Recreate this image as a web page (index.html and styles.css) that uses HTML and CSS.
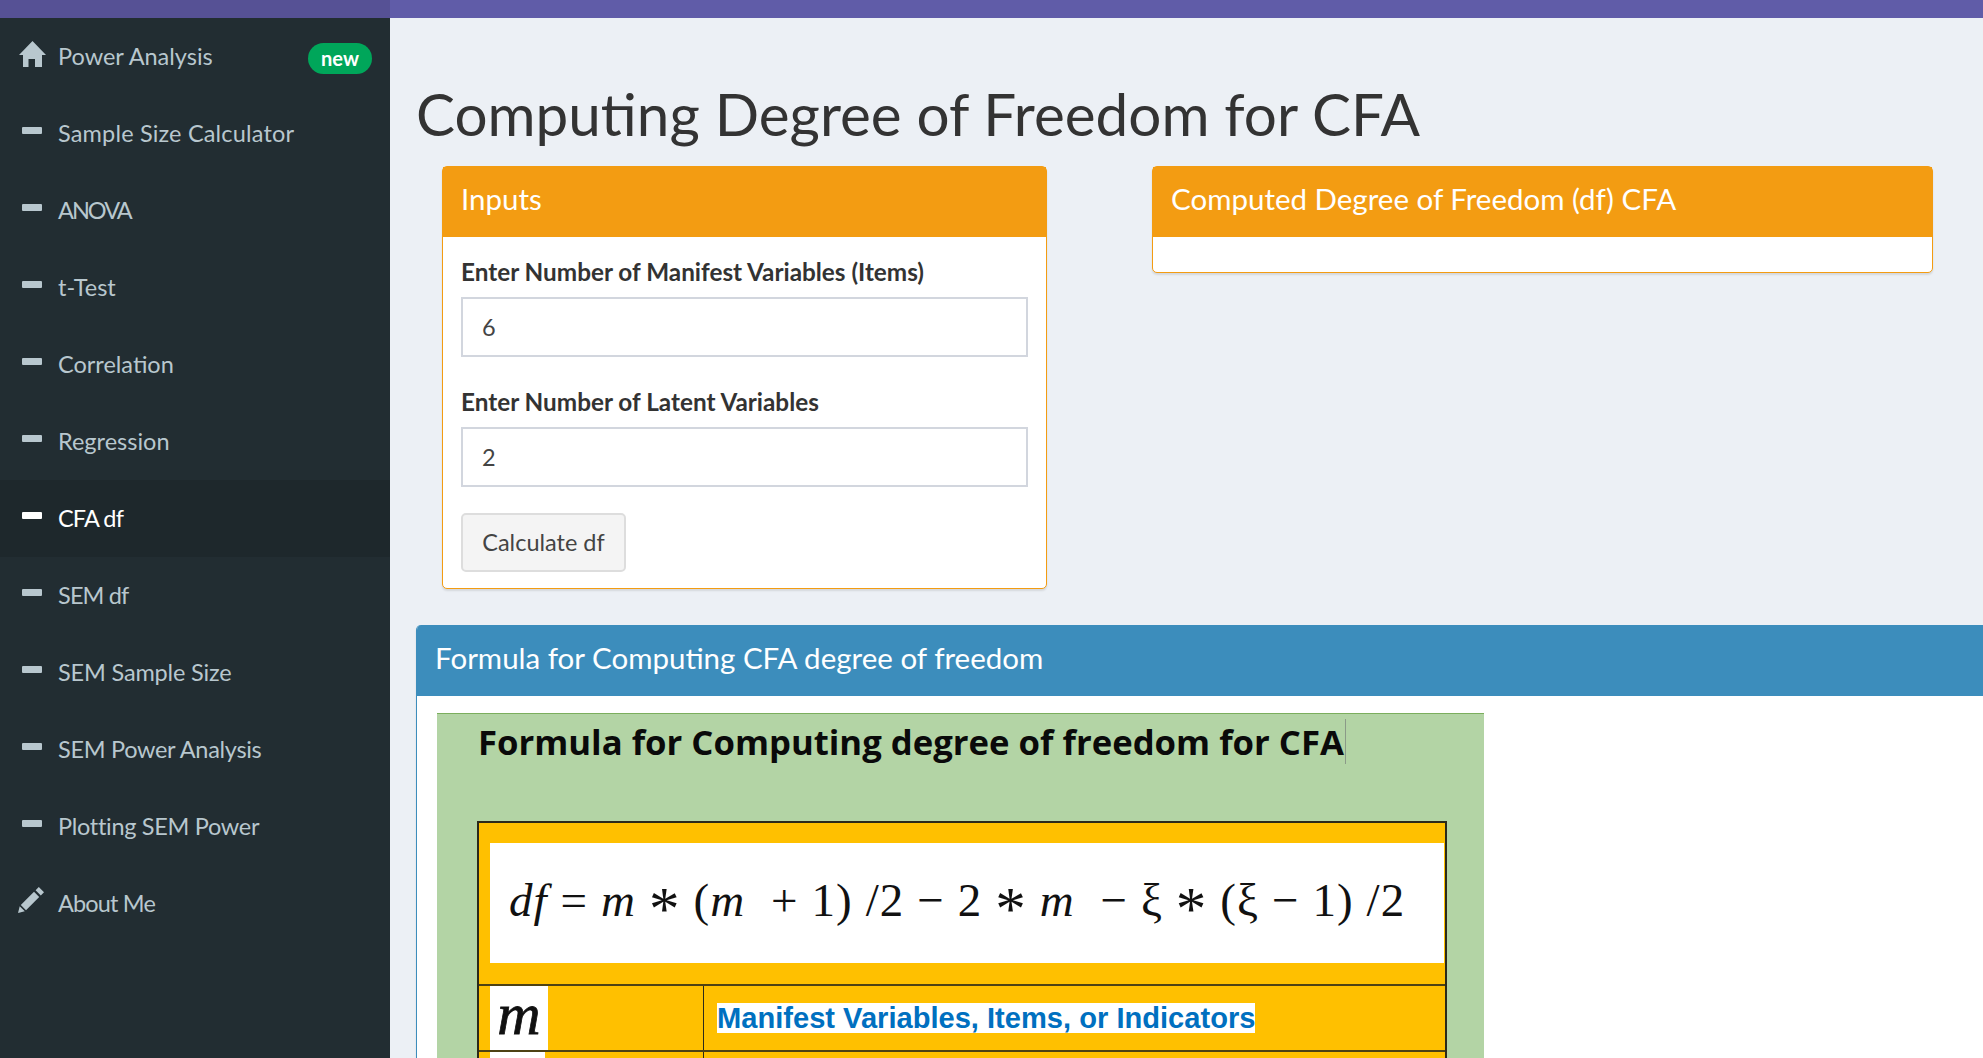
FILE: index.html
```html
<!DOCTYPE html>
<html lang="en">
<head>
<meta charset="utf-8">
<title>Computing Degree of Freedom for CFA</title>
<link rel="stylesheet" href="styles.css">
</head>
<body>
<header class="topbar"><div class="topbar-logo"></div><div class="topbar-nav"></div></header>
<div class="shell">
  <aside class="sidebar">
    <a class="item"><span class="ico"><svg class="home" viewBox="0 0 27 26"><path d="M13.500 0L27 14h-4v12h-7V18H9.500v8H4V14H0z"/></svg></span><span class="label">Power Analysis</span><span class="badge">new</span></a>
    <a class="item"><span class="ico"><i class="dash"></i></span><span class="label ls-p">Sample Size Calculator</span></a>
    <a class="item"><span class="ico"><i class="dash"></i></span><span class="label ls-l">ANOVA</span></a>
    <a class="item"><span class="ico"><i class="dash"></i></span><span class="label">t-Test</span></a>
    <a class="item"><span class="ico"><i class="dash"></i></span><span class="label">Correlation</span></a>
    <a class="item"><span class="ico"><i class="dash"></i></span><span class="label">Regression</span></a>
    <a class="item active"><span class="ico"><i class="dash"></i></span><span class="label ls-m">CFA df</span></a>
    <a class="item"><span class="ico"><i class="dash"></i></span><span class="label ls-m">SEM df</span></a>
    <a class="item"><span class="ico"><i class="dash"></i></span><span class="label ls-xs">SEM Sample Size</span></a>
    <a class="item"><span class="ico"><i class="dash"></i></span><span class="label ls-s">SEM Power Analysis</span></a>
    <a class="item"><span class="ico"><i class="dash"></i></span><span class="label ls-s">Plotting SEM Power</span></a>
    <a class="item"><span class="ico"><svg class="pencil" viewBox="0 0 26 26"><path d="M0 26l1.700-6.800 5.100 5.100zM2.800 18L16 4.800 21.200 10 8 23.200zM17.600 3.200L20.800 0 26 5.200l-3.200 3.200z"/></svg></span><span class="label ls-m">About Me</span></a>
  </aside>
  <main class="content">
    <h1 class="title">Computing Degree of Freedom for CFA</h1>
    <div class="top-row">
      <section class="box box-orange box-inputs">
        <h3 class="box-head">Inputs</h3>
        <div class="box-body">
          <label class="field-label">Enter Number of Manifest Variables (Items)</label>
          <div class="input">6</div>
          <label class="field-label second">Enter Number of Latent Variables</label>
          <div class="input">2</div>
          <button class="btn">Calculate df</button>
        </div>
      </section>
      <section class="box box-orange box-output">
        <h3 class="box-head">Computed Degree of Freedom (df) CFA</h3>
        <div class="output-body"></div>
      </section>
    </div>
    <section class="box box-blue">
      <h3 class="box-head">Formula for Computing CFA degree of freedom</h3>
      <div class="formula-body">
        <div class="picture">
          <div class="pic-title"><span class="pic-title-text">Formula for Computing degree of freedom for CFA</span></div>
          <div class="pic-table">
            <div class="pic-formula-row">
              <div class="pic-formula"><span class="math"><i>df</i> = <i>m</i> <span class="ast">*</span> (<i>m</i>&nbsp; + 1) /2 − 2 <span class="ast">*</span> <i>m</i>&nbsp; − ξ <span class="ast">*</span> (ξ − 1) /2</span></div>
            </div>
            <div class="pic-row">
              <div class="pic-sym"><span class="sym-white">m</span></div>
              <div class="pic-desc"><span class="desc-text">Manifest Variables, Items, or Indicators</span></div>
            </div>
            <div class="pic-row">
              <div class="pic-sym"><span class="sym-white narrow"></span></div>
              <div class="pic-desc"></div>
            </div>
          </div>
        </div>
      </div>
    </section>
  </main>
</div>
</body>
</html>
```
FILE: styles.css
```css
* { box-sizing: border-box; }
html, body { margin: 0; height: 1058px; overflow: hidden; }
body { background: #ecf0f5; font-family: "Lato", "Noto Sans", sans-serif; color: #333; width: 1983px; }

.topbar { display: flex; height: 18px; }
.topbar-logo { width: 390px; background: #565195; }
.topbar-nav { flex: 1; background: #605ca8; }

.shell { display: flex; height: 1040px; overflow: hidden; }
.sidebar { width: 390px; flex: none; background: #222d32; }
.item { display: flex; align-items: center; height: 77px; padding: 0 18px 2px; color: #b8c7ce; font-size: 23.500px; }
.item.active { background: #1e282c; color: #fff; }
.ico { width: 40px; flex: none; display: flex; align-items: center; }
.home { width: 27px; height: 26px; margin: -4px 0 0 1px; fill: #b8c7ce; }
.pencil { width: 26px; height: 26px; margin-top: -6px; fill: #b8c7ce; }
.dash { display: block; width: 20px; height: 7px; margin: -4px 0 0 4px; background: #b8c7ce; border-radius: 1px; }
.active .dash { background: #fff; }
.label { flex: 1; }
.ls-p { letter-spacing: .17px; }
.ls-xs { letter-spacing: -.17px; }
.ls-s { letter-spacing: -.3px; }
.ls-m { letter-spacing: -.85px; }
.ls-l { letter-spacing: -2px; }
.badge { margin: 6px 0 0; width: 64px; height: 31px; line-height: 30px; text-align: center; background: #00a65a; color: #fff; font-size: 20px; font-weight: 700; border-radius: 16px; }

.content { flex: 1; min-width: 0; padding-left: 26px; }
.title { margin: 0; height: 148px; padding-top: 58px; font-size: 58.400px; line-height: 74px; font-weight: 400; color: #333; white-space: nowrap; }
.top-row { display: flex; align-items: flex-start; gap: 105px; padding-left: 26px; }
.box { background: #fff; border-radius: 5px; box-shadow: 0 2px 2px rgba(0,0,0,.1); }
.box-orange { border: 1px solid #f39c12; }
.box-head { margin: 0; height: 70px; padding: 0 18px 7px; display: flex; align-items: center; font-size: 29.500px; font-weight: 400; color: #fff; white-space: nowrap; }
.box-orange .box-head { background: #f39c12; }
.box-inputs { width: 605px; height: 423px; }
.box-output { width: 781px; height: 107px; }
.box-body { padding: 0 18px; }
.field-label { display: block; padding-top: 22px; height: 60px; line-height: 26px; font-size: 24.300px; font-weight: 700; color: #333; white-space: nowrap; }
.field-label.second { padding-top: 32px; height: 70px; }
.input { height: 60px; border: 2px solid #d2d6de; padding: 0 19px; display: flex; align-items: center; font-size: 23.500px; color: #444; }
.btn { display: block; margin-top: 26px; width: 165px; height: 59px; padding: 0 0 2px; background: #f4f4f4; border: 2px solid #ddd; border-radius: 5px; font: inherit; font-size: 23.500px; color: #444; }

.box-blue { margin-top: 36px; height: 433px; overflow: hidden; border-left: 1px solid #3c8dbc; border-radius: 5px 0 0 0; }
.box-blue .box-head { background: #3c8dbc; height: 71px; }
.formula-body { padding: 17px 0 0 20px; }
.picture { width: 1047px; height: 345px; overflow: hidden; background: #b3d4a5; border-top: 1px solid #7bae5d; padding: 0 0 0 40px; }
.pic-title { height: 107px; padding: 5px 0 0 1px; }
.pic-title-text { display: inline-block; height: 45px; line-height: 45px; padding-right: 1px; border-right: 1px solid #8b9a88; font-family: "Open Sans", sans-serif; font-weight: 700; font-size: 34.700px; color: #0a0a0a; white-space: nowrap; }
.pic-table { width: 970px; height: 237px; overflow: hidden; background: #ffc000; border: 2px solid #2b2a1a; border-bottom: 0; }
.pic-formula-row { height: 163px; padding: 20px 1px 0 11px; border-bottom: 2px solid #4d4214; }
.pic-formula { height: 120px; background: #fff; padding: 0 0 6px 19px; display: flex; align-items: center; font-family: "Liberation Serif", serif; font-size: 47px; color: #111; white-space: pre; }
.math { letter-spacing: 1.100px; }
.ast { font-size: 1.3em; line-height: 0; vertical-align: -.22em; }
.pic-row { display: flex; height: 66px; border-bottom: 2px solid #4d4214; }
.pic-sym { width: 225px; flex: none; padding-left: 11px; border-right: 1px solid #2b2a1a; }
.sym-white { display: block; width: 58px; height: 100%; background: #fff; font-family: "Liberation Serif", serif; font-style: italic; font-weight: 400; font-size: 60px; line-height: 56px; text-align: center; color: #111; -webkit-text-stroke: .8px #111; }
.sym-white.narrow { width: 55px; }
.pic-desc { flex: 1; padding: 17px 0 0 13px; }
.desc-text { display: inline-block; height: 30px; line-height: 30px; background: #fff; font-family: "Liberation Sans", sans-serif; font-weight: 700; font-size: 29.100px; color: #0070c0; white-space: nowrap; }
```
